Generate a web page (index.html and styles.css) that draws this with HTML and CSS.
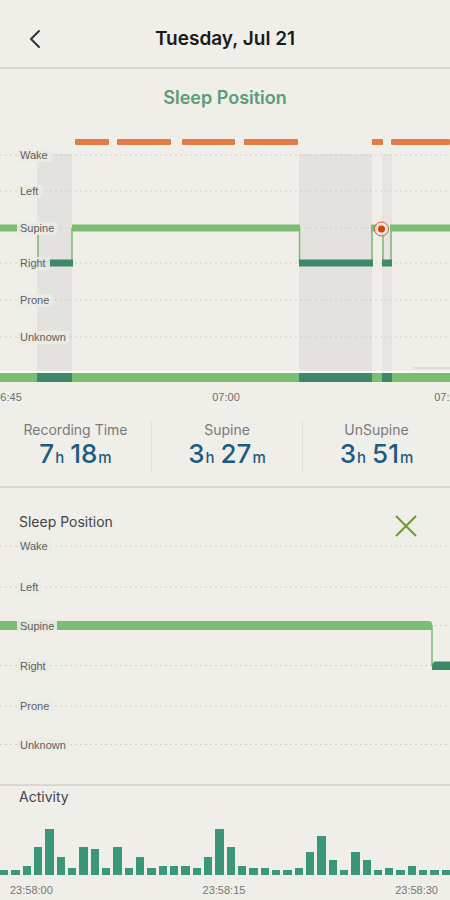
FILE: index.html
```html
<!DOCTYPE html>
<html lang="en">
<head>
    <meta charset="UTF-8">
    <meta name="viewport" content="width=device-width, initial-scale=1.0">
    <title>Sleep Position - Tuesday, Jul 21</title>
    <link rel="stylesheet" href="styles.css">
</head>
<body>

<div class="topbar">
    <a href="#" class="back" aria-label="Back">
        <svg width="14" height="20" viewBox="0 0 14 20"><path d="M11 2 L3 10 L11 18" fill="none" stroke="#333" stroke-width="2" stroke-linecap="round" stroke-linejoin="round"/></svg>
    </a>
    <h1>Tuesday, Jul 21</h1>
    <span></span>
</div>

<h2 class="chart-title">Sleep Position</h2>

<!-- overview chart: y rows Wake 25, Left 61, Supine 98, Right 133, Prone 170, Unknown 207 -->
<svg class="overview" width="450" height="275" viewBox="0 0 450 275">
    <g fill="#e27b45">
        <rect x="75" y="9" width="34" height="6" rx="1"/>
        <rect x="117" y="9" width="54" height="6" rx="1"/>
        <rect x="182" y="9" width="53" height="6" rx="1"/>
        <rect x="244" y="9" width="54" height="6" rx="1"/>
        <rect x="372" y="9" width="11" height="6" rx="1"/>
        <rect x="391" y="9" width="59" height="6" rx="1"/>
    </g>
    <rect x="37" y="24" width="35" height="217" fill="#e3e2df"/>
    <rect x="299" y="24" width="73" height="217" fill="#e3e2df"/>
    <rect x="382" y="24" width="10" height="217" fill="#e6e5e2"/>

    <g stroke="#d2d1cb" stroke-width="1" stroke-dasharray="2 3">
        <line x1="0" y1="25" x2="450" y2="25"/>
        <line x1="0" y1="61" x2="450" y2="61"/>
        <line x1="0" y1="98" x2="450" y2="98"/>
        <line x1="0" y1="133" x2="450" y2="133"/>
        <line x1="0" y1="170" x2="450" y2="170"/>
        <line x1="0" y1="207" x2="450" y2="207"/>
    </g>

    <g stroke="#7aba72" stroke-width="1.5" fill="none">
        <line x1="38" y1="98" x2="38" y2="133"/>
        <line x1="72" y1="98" x2="72" y2="133"/>
        <line x1="299.5" y1="98" x2="299.5" y2="133"/>
        <line x1="372" y1="98" x2="372" y2="133"/>
        <line x1="383" y1="98" x2="383" y2="133"/>
        <line x1="391" y1="98" x2="391" y2="133"/>
    </g>
    <g stroke="#7cbd74" stroke-width="7">
        <line x1="0" y1="98" x2="38" y2="98"/>
        <line x1="72" y1="98" x2="300" y2="98"/>
        <line x1="371" y1="98" x2="383" y2="98"/>
        <line x1="390" y1="98" x2="450" y2="98"/>
    </g>
    <g stroke="#3d8a6b" stroke-width="7">
        <line x1="38" y1="133" x2="73" y2="133"/>
        <line x1="299" y1="133" x2="373" y2="133"/>
        <line x1="382" y1="133" x2="392" y2="133"/>
    </g>
    <circle cx="381.5" cy="99" r="7" fill="#f4e6e0" fill-opacity="0.8" stroke="#d9534a" stroke-width="1"/>
    <circle cx="381.5" cy="99" r="3.5" fill="#d8420f"/>

    <g class="row-label">
        <rect x="17" y="19" width="35" height="13" rx="2"/>
        <text x="20" y="29">Wake</text>
        <rect x="17" y="55" width="25" height="13" rx="2"/>
        <text x="20" y="65">Left</text>
        <rect x="17" y="92" width="40" height="13" rx="2"/>
        <text x="20" y="102">Supine</text>
        <rect x="17" y="127" width="33" height="13" rx="2"/>
        <text x="20" y="137">Right</text>
        <rect x="17" y="164" width="36" height="13" rx="2"/>
        <text x="20" y="174">Prone</text>
        <rect x="17" y="201" width="52" height="13" rx="2"/>
        <text x="20" y="211">Unknown</text>
    </g>

    <rect x="413" y="237" width="37" height="2" fill="#dcdbd7"/>
    <rect x="0" y="241" width="450" height="2" fill="#f8f8f5"/>
    <rect x="0" y="243" width="450" height="9" fill="#7cbd74"/>
    <g fill="#3d8a6b">
        <rect x="37" y="243" width="35" height="9"/>
        <rect x="299" y="243" width="73" height="9"/>
        <rect x="382" y="243" width="10" height="9"/>
    </g>

    <g class="axis-label" text-anchor="middle">
        <text x="8" y="271">06:45</text>
        <text x="226" y="271">07:00</text>
        <text x="448" y="271">07:15</text>
    </g>
</svg>

<div class="stats">
    <div class="stat">
        <div class="stat-label">Recording Time</div>
        <div class="stat-value">7<small>h</small>18<small>m</small></div>
    </div>
    <div class="stat">
        <div class="stat-label">Supine</div>
        <div class="stat-value">3<small>h</small>27<small>m</small></div>
    </div>
    <div class="stat">
        <div class="stat-label">UnSupine</div>
        <div class="stat-value">3<small>h</small>51<small>m</small></div>
    </div>
</div>

<div class="detail">
    <div class="detail-head">
        <span>Sleep Position</span>
        <a href="#" class="close" aria-label="Close">
            <svg width="22" height="22" viewBox="0 0 22 22"><path d="M1 1 L21 21 M21 1 L1 21" stroke="#6b9b30" stroke-width="2" fill="none"/></svg>
        </a>
    </div>
    <!-- zoomed chart: rows Wake 14, Left 55, Supine 93.5, Right 133.5, Prone 174, Unknown 212.5 -->
    <svg class="zoomed" width="450" height="252" viewBox="0 0 450 252">
        <g stroke="#d2d1cb" stroke-width="1" stroke-dasharray="2 3">
            <line x1="0" y1="14" x2="450" y2="14"/>
            <line x1="0" y1="55" x2="450" y2="55"/>
            <line x1="0" y1="93.5" x2="450" y2="93.5"/>
            <line x1="0" y1="133.5" x2="450" y2="133.5"/>
            <line x1="0" y1="174" x2="450" y2="174"/>
            <line x1="0" y1="212.5" x2="450" y2="212.5"/>
        </g>
        <line x1="432" y1="93" x2="432" y2="134" stroke="#7aba72" stroke-width="1.5"/>
        <path d="M0 89 H429 Q432 89 432 92 V98 H0 Z" fill="#7cbd74"/>
        <path d="M432 137 Q432 129.5 435 129.5 H450 V138 H432 Z" fill="#3d8a6b"/>

        <g class="row-label">
            <rect x="17" y="8" width="35" height="13" rx="2"/>
            <text x="20" y="18">Wake</text>
            <rect x="17" y="49" width="25" height="13" rx="2"/>
            <text x="20" y="59">Left</text>
            <rect x="17" y="87" width="40" height="13" rx="2"/>
            <text x="20" y="97.5">Supine</text>
            <rect x="17" y="127" width="33" height="13" rx="2"/>
            <text x="20" y="137.5">Right</text>
            <rect x="17" y="168" width="36" height="13" rx="2"/>
            <text x="20" y="178">Prone</text>
            <rect x="17" y="206" width="52" height="13" rx="2"/>
            <text x="20" y="216.5">Unknown</text>
        </g>
    </svg>
</div>

<div class="activity">
    <div class="activity-title">Activity</div>
    <div class="bars" id="bars"></div>
    <div class="activity-axis">
        <span>23:58:00</span>
        <span>23:58:15</span>
        <span>23:58:30</span>
    </div>
</div>

<script>
    // activity counts, one bar per sample
    const activity = [5, 5, 9, 28, 46, 18, 7, 28, 26, 7, 28, 7, 18, 7, 9, 9, 9, 7, 18, 46,
                      28, 9, 7, 7, 5, 5, 7, 23, 39, 15, 5, 23, 15, 5, 7, 5, 9, 5, 5, 5];
    const bars = document.getElementById('bars');
    activity.forEach(function (h) {
        const bar = document.createElement('div');
        bar.className = 'bar';
        bar.style.height = h + 'px';
        bars.appendChild(bar);
    });
</script>

</body>
</html>
```

FILE: styles.css
```css
body {
    font-family: Inter, "Liberation Sans", Arial, sans-serif;
    background-color: #efeee8;
    margin: 0;
    width: 450px;
    overflow: hidden;
}
.topbar {
    display: grid;
    grid-template-columns: 68px 1fr 68px;
    align-items: center;
    height: 67px;
    border-bottom: 2px solid #d8d7d0;
}
.back {
    display: flex;
    padding-left: 28px;
    padding-top: 10px;
}
.topbar h1 {
    margin: 0;
    text-align: center;
    font-size: 19px;
    font-weight: 600;
    color: #1a1a1a;
    padding-top: 9px;
}
.chart-title {
    margin: 0;
    padding: 18px 0 21px;
    line-height: 22px;
    text-align: center;
    font-size: 18px;
    font-weight: 600;
    color: #5d9b7c;
}
svg {
    display: block;
}
.row-label rect {
    fill: #ecebe6;
    fill-opacity: 0.92;
}
.row-label text {
    font-family: "Liberation Sans", Arial, sans-serif;
    font-size: 11px;
    fill: #5e5e5e;
}
.axis-label text {
    font-family: "Liberation Sans", Arial, sans-serif;
    font-size: 11px;
    fill: #6e6e6e;
}
.stats {
    display: grid;
    grid-template-columns: 151px 151px 1fr;
    padding: 16px 0 13px;
    border-bottom: 2px solid #d8d7d0;
}
.stat {
    text-align: center;
}
.stat + .stat {
    border-left: 1px solid #e0dfd8;
}
.stat-label {
    font-size: 14px;
    line-height: 18px;
    color: #7a7a7a;
}
.stat-value {
    font-size: 26px;
    line-height: 30px;
    font-weight: 500;
    color: #1e5b82;
}
.stat-value small {
    font-size: 15px;
    margin: 0 6px 0 1px;
}
.stat-value small:last-child {
    margin-right: 0;
}
.detail {
    border-bottom: 2px solid #d8d7d0;
}
.detail-head {
    display: flex;
    justify-content: space-between;
    align-items: flex-start;
    padding: 24px 33px 0 19px;
    line-height: 20px;
    font-size: 14px;
    color: #444;
}
.close {
    display: flex;
    margin-top: 3px;
    margin-bottom: -5px;
}
.activity {
    padding-top: 1px;
}
.activity-title {
    padding-left: 19px;
    line-height: 20px;
    font-size: 14px;
    color: #444;
}
.bars {
    display: flex;
    align-items: flex-end;
    gap: 3px;
    height: 50px;
    margin-top: 18px;
}
.bar {
    flex: 0 0 8.34px;
    background: #3a977a;
}
.activity-axis {
    display: flex;
    justify-content: space-between;
    padding: 0 12px 0 10px;
    margin-top: 8px;
    line-height: 14px;
    font-family: "Liberation Sans", Arial, sans-serif;
    font-size: 11px;
    color: #777;
}
```
